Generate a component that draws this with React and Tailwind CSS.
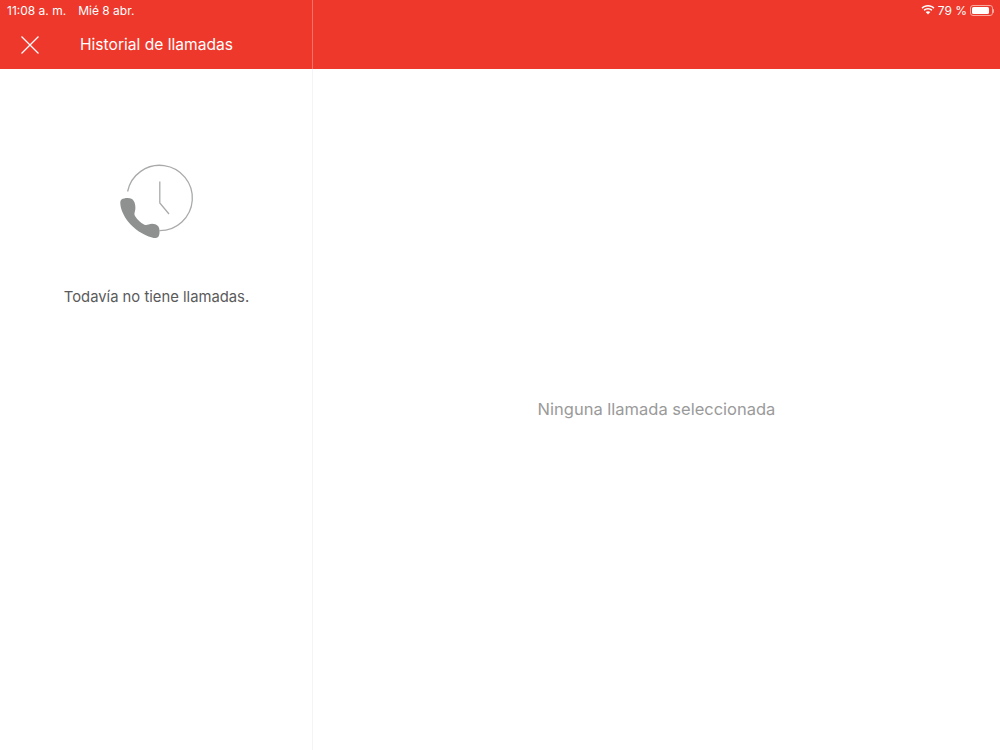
import React from "react";

const font = { fontFamily: '"Inter", "Liberation Sans", sans-serif' };

const CallClockIcon = () => (
  <svg width="95" height="95" viewBox="0 0 95 95" fill="none">
    <path
      d="M17.6 36.5A32.7 32.7 0 1 1 49.5 75.7"
      stroke="#a9aaaa"
      strokeWidth="1.3"
    />
    <path d="M49.8 26.5V48L59 59" stroke="#a9aaaa" strokeWidth="1.3" />
    <path
      d="M11.5 44.5C14 43 19 42.5 22 44C25 46 26 52 25 56C24.5 58 24 59.5 25 61C27.5 65 30.5 67.5 34 69.5C35.5 70.3 37 70 38.5 69.5C41.5 68 45.5 68.5 48 71C50 73.5 50 79 48.5 81.5C47.5 83 45 83.5 42 82.5C33 80 24 74 18 66.5C13.5 60.5 10.5 54 10.3 48.5C10.2 46.5 10.5 45.2 11.5 44.5Z"
      fill="#8f9191"
    />
  </svg>
);

const WifiIcon = () => (
  <svg width="14" height="10" viewBox="0 0 14 10" fill="white">
    <path d="M7 1.6C9.1 1.6 11 2.4 12.4 3.8L13.5 2.7C11.8 1 9.5 0 7 0S2.2 1 .5 2.7L1.6 3.8C3 2.4 4.9 1.6 7 1.6Z" />
    <path d="M7 4.6C8.3 4.6 9.4 5.1 10.3 5.9L11.4 4.8C10.2 3.7 8.7 3 7 3S3.8 3.7 2.6 4.8L3.7 5.9C4.6 5.1 5.7 4.6 7 4.6Z" />
    <path d="M7 6.2C6.1 6.2 5.3 6.5 4.7 7.1L7 9.6L9.3 7.1C8.7 6.5 7.9 6.2 7 6.2Z" />
  </svg>
);

const BatteryIcon = () => (
  <div className="flex items-center">
    <div className="w-[23px] h-[11px] rounded-[3px] border border-[#f9a8a0] p-px">
      <div className="w-[17px] h-full rounded-[1.5px] bg-white" />
    </div>
    <div className="w-px h-1 rounded-r-sm bg-[#f9a8a0]" />
  </div>
);

export default function App() {
  return (
    <div className="w-[1000px] h-[750px] bg-white flex overflow-hidden" style={font}>
      <aside className="w-[313px] flex flex-col border-r border-[#f4f4f4]">
        <header className="h-[69px] bg-[#ee382b] border-r border-[#f77168] -mr-px text-white">
          <div className="flex gap-[12px] pl-[7px] pt-[3px] text-[12px] leading-[15px]">
            <span>11:08 a. m.</span>
            <span>Mié 8 abr.</span>
          </div>
          <div className="flex items-center pl-[21px] pt-[15px]">
            <svg width="18" height="18" viewBox="0 0 18 18" stroke="white" strokeWidth="1.2" fill="none">
              <path d="M.5.5L17.5 17.5M17.5.5L.5 17.5" />
            </svg>
            <h1 className="ml-[41px] text-[15.6px] leading-[24px] font-normal">Historial de llamadas</h1>
          </div>
        </header>
        <div className="flex flex-col items-center pt-[86px]">
          <div className="ml-[2px]">
            <CallClockIcon />
          </div>
          <p className="mt-[36px] ml-[1px] text-[14.8px] leading-[22px] text-[#5a5a5a]">Todavía no tiene llamadas.</p>
        </div>
      </aside>
      <main className="flex-1 flex flex-col">
        <header className="h-[69px] bg-[#ee382b] flex justify-end items-start gap-[3px] pt-[3px] pr-[6px] text-white text-[12px] leading-[15px]">
          <div className="pt-[2px]">
            <WifiIcon />
          </div>
          <span>79 %</span>
          <div className="pt-[2px]">
            <BatteryIcon />
          </div>
        </header>
        <div className="flex-1 flex items-center justify-center pb-[2px]">
          <p className="text-[16.5px] leading-[24px] text-[#9a9a9a]">Ninguna llamada seleccionada</p>
        </div>
      </main>
    </div>
  );
}
